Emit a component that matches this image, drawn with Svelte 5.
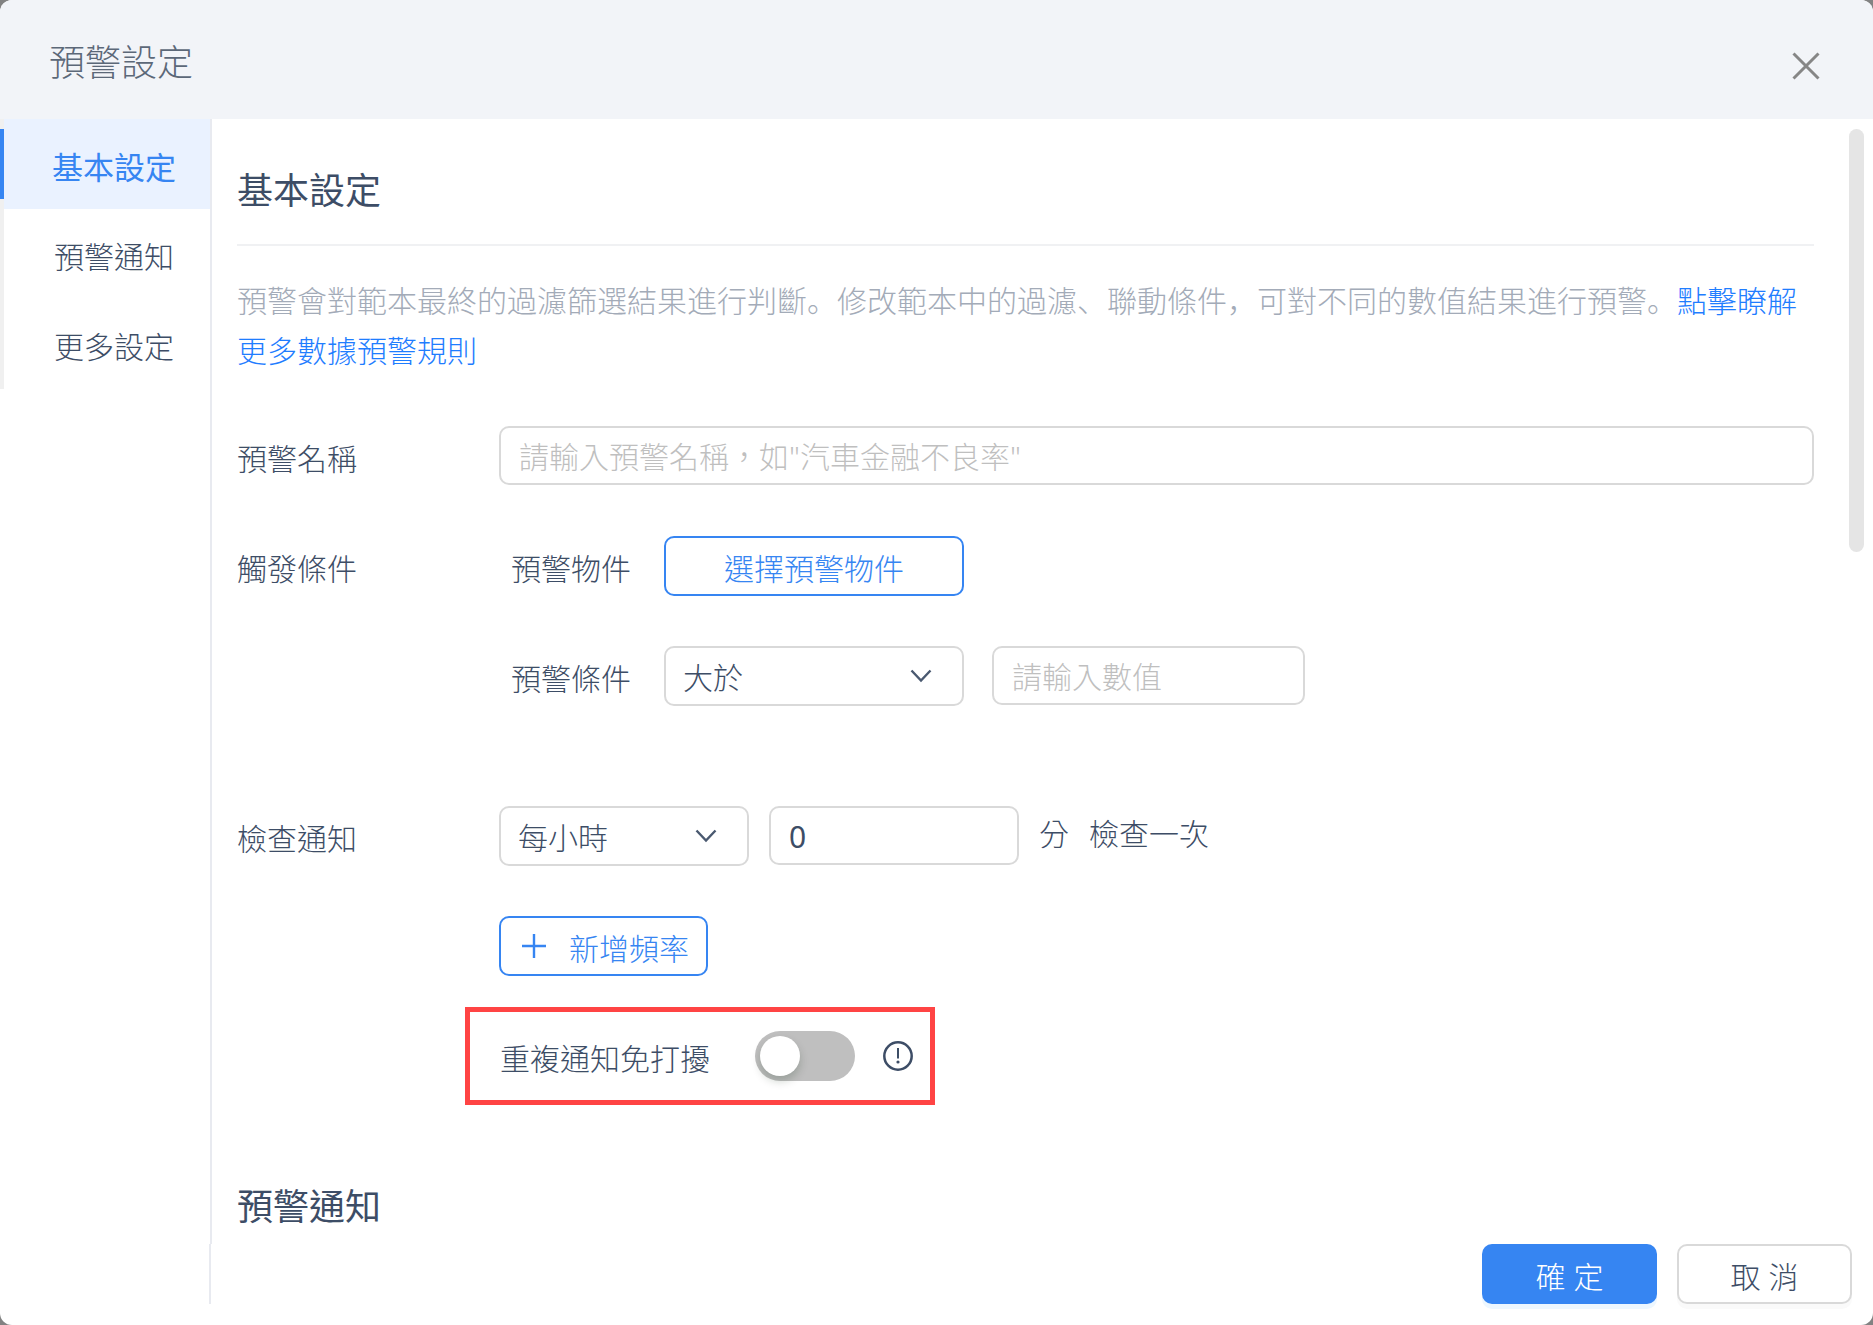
<script>
  let activeTab = 'basic';
  let alertName = '';
  let operator = 'gt';
  let threshold = '';
  let frequency = 'hour';
  let minute = '0';
  let muteRepeat = false;

  const tabs = [
    { id: 'basic', label: '基本設定' },
    { id: 'notify', label: '預警通知' },
    { id: 'more', label: '更多設定' },
  ];
</script>

<div class="dialog">
  <header class="dialog-header">
    <h1>預警設定</h1>
    <button type="button" class="close-btn" aria-label="關閉">
      <svg width="28" height="28" viewBox="0 0 28 28">
        <path d="M1.5 1.5 L26.5 26.5 M26.5 1.5 L1.5 26.5" fill="none" stroke="#868686" stroke-width="3" />
      </svg>
    </button>
  </header>

  <div class="dialog-body">
    <nav class="sidebar">
      {#each tabs as tab}
        <button
          type="button"
          class="tab"
          class:active={activeTab === tab.id}
          on:click={() => (activeTab = tab.id)}
        >
          {tab.label}
        </button>
      {/each}
    </nav>

    <main class="content">
      <h2 class="divided">基本設定</h2>
      <p class="hint">
        預警會對範本最終的過濾篩選結果進行判斷。修改範本中的過濾、聯動條件，可對不同的數值結果進行預警。<a href="#rules">點擊瞭解更多數據預警規則</a>
      </p>

      <div class="row">
        <label class="label" for="alertName">預警名稱</label>
        <input
          type="text"
          id="alertName"
          class="name-input"
          placeholder={'請輸入預警名稱，如"汽車金融不良率"'}
          bind:value={alertName}
        />
      </div>

      <div class="row">
        <span class="label">觸發條件</span>
        <div class="fields">
          <div class="line">
            <span class="sub-label">預警物件</span>
            <button type="button" class="outline-btn pick-btn">選擇預警物件</button>
          </div>
          <div class="line">
            <label class="sub-label" for="operator">預警條件</label>
            <div class="select-wrap wide">
              <select id="operator" bind:value={operator}>
                <option value="gt">大於</option>
                <option value="lt">小於</option>
                <option value="eq">等於</option>
              </select>
              <svg class="chevron" width="22" height="14" viewBox="0 0 22 14">
                <path d="M1.5 1.5 L11 11.5 L20.5 1.5" fill="none" stroke="#4a5970" stroke-width="2.4" />
              </svg>
            </div>
            <input
              type="text"
              class="threshold-input"
              aria-label="數值"
              placeholder="請輸入數值"
              bind:value={threshold}
            />
          </div>
        </div>
      </div>

      <div class="row check-row">
        <label class="label" for="frequency">檢查通知</label>
        <div class="fields">
          <div class="line">
            <div class="select-wrap">
              <select id="frequency" bind:value={frequency}>
                <option value="hour">每小時</option>
                <option value="day">每天</option>
              </select>
              <svg class="chevron" width="22" height="14" viewBox="0 0 22 14">
                <path d="M1.5 1.5 L11 11.5 L20.5 1.5" fill="none" stroke="#4a5970" stroke-width="2.4" />
              </svg>
            </div>
            <input type="text" id="minute" class="minute-input" bind:value={minute} />
            <label class="unit" for="minute">分</label>
            <span class="unit">檢查一次</span>
          </div>
          <div class="line">
            <button type="button" class="outline-btn add-btn">
              <svg width="24" height="24" viewBox="0 0 24 24">
                <path d="M12 0 V24 M0 12 H24" fill="none" stroke="#3685f2" stroke-width="2.4" />
              </svg>
              <span>新增頻率</span>
            </button>
          </div>
        </div>
      </div>

      <div class="highlight">
        <label for="muteRepeat">重複通知免打擾</label>
        <input type="checkbox" role="switch" id="muteRepeat" class="switch" bind:checked={muteRepeat} />
        <svg class="info" width="30" height="30" viewBox="0 0 30 30">
          <circle cx="15" cy="15" r="13.7" fill="none" stroke="#3d4d66" stroke-width="2.5" />
          <path d="M15 7 V17.5" stroke="#3d4d66" stroke-width="2" />
          <circle cx="15" cy="21" r="1.6" fill="#3d4d66" />
        </svg>
      </div>

      <h2>預警通知</h2>
    </main>

    <div class="scroll-track">
      <div class="scroll-thumb"></div>
    </div>
  </div>

  <footer class="dialog-footer">
    <div class="footer-side"></div>
    <button type="button" class="ok-btn">確 定</button>
    <button type="button" class="cancel-btn">取 消</button>
  </footer>
</div>

<style>
  :global(body) {
    background: #828282;
  }

  .dialog {
    display: flex;
    flex-direction: column;
    min-height: 100vh;
    border-radius: 12px;
    overflow: hidden;
    background: #fff;
    color: #3d4d66;
    font-family: "Noto Sans", "Noto Sans CJK TC", sans-serif;
    font-size: 30px;
    font-weight: 300;
    line-height: 50px;
  }

  * {
    box-sizing: border-box;
  }

  button,
  input,
  select {
    font: inherit;
    color: inherit;
    margin: 0;
    padding: 0;
    outline: none;
  }

  button {
    background: none;
    border: none;
    cursor: pointer;
  }

  svg {
    display: block;
  }

  .dialog-header {
    display: flex;
    align-items: center;
    justify-content: space-between;
    padding: 6px 53px 0 49px;
    height: 119px;
    background: #f2f4f8;
    color: #5c6878;
  }

  h1 {
    margin: 0;
    font-size: 36px;
    font-weight: 300;
    line-height: 54px;
  }

  .close-btn {
    padding-top: 6px;
  }

  .dialog-body {
    display: flex;
    flex: 1;
  }

  .sidebar {
    display: flex;
    flex-direction: column;
    flex: none;
    width: 212px;
    border-right: 2px solid #e8eaf0;
  }

  .tab {
    position: relative;
    height: 90px;
    padding: 5px 0 0 14px;
    border-left: 4px solid #f0f0f0;
    text-align: center;
  }

  .tab.active {
    background: #eaf2ff;
    color: #3685f2;
    font-size: 31px;
    font-weight: 400;
  }

  .tab.active::before {
    content: "";
    position: absolute;
    left: -4px;
    top: 10px;
    bottom: 10px;
    width: 4px;
    background: #3685f2;
  }

  .content {
    flex: 1;
    min-width: 0;
    padding: 0 0 9px 25px;
  }

  h2 {
    margin: 0;
    padding-top: 45px;
    font-size: 36px;
    font-weight: 400;
    line-height: 54px;
  }

  h2.divided {
    padding-bottom: 26px;
    border-bottom: 2px solid #f0f1f3;
  }

  .hint {
    margin: 30px 0 50px;
    color: #a3abb8;
    font-family: "Noto Sans", "Noto Sans CJK SC", sans-serif;
  }

  .hint a {
    color: #1f7dff;
    text-decoration: none;
  }

  .row {
    display: flex;
    margin-bottom: 50px;
  }

  .row.check-row {
    margin-top: 100px;
    margin-bottom: 31px;
  }

  .label {
    flex: none;
    width: 262px;
    line-height: 65px;
    height: 60px;
  }

  .fields {
    display: flex;
    flex-direction: column;
    flex: 1;
    gap: 50px;
  }

  .line {
    display: flex;
    height: 60px;
  }

  .sub-label {
    width: 165px;
    padding-left: 12px;
    line-height: 65px;
  }

  input[type="text"] {
    height: 59px;
    padding: 2px 18px 0;
    border: 2px solid #d9d9d9;
    border-radius: 10px;
    background: #fff;
  }

  input::placeholder {
    color: #bfbfbf;
    opacity: 1;
  }

  .name-input {
    flex: 1;
    min-width: 0;
  }

  .threshold-input {
    width: 313px;
    margin-left: 28px;
  }

  .minute-input {
    width: 250px;
    margin-left: 20px;
    font-weight: 400;
  }

  .select-wrap {
    position: relative;
    width: 250px;
  }

  .select-wrap.wide {
    width: 300px;
  }

  select {
    appearance: none;
    width: 100%;
    height: 60px;
    padding: 3px 50px 0 17px;
    border: 2px solid #d9d9d9;
    border-radius: 10px;
    background: #fff;
  }

  .chevron {
    position: absolute;
    right: 32px;
    top: 23px;
    pointer-events: none;
  }

  .unit {
    margin-left: 20px;
    line-height: 56px;
  }

  .outline-btn {
    height: 60px;
    padding-top: 5px;
    border: 2px solid #3685f2;
    border-radius: 10px;
    background: #fff;
    color: #3685f2;
  }

  .pick-btn {
    width: 300px;
  }

  .add-btn {
    display: flex;
    align-items: center;
    gap: 23px;
    padding: 0 17px 0 21px;
  }

  .add-btn span {
    padding-top: 5px;
  }

  .highlight {
    display: flex;
    align-items: center;
    width: 470px;
    height: 98px;
    margin: 0 0 30px 228px;
    padding-left: 30px;
    border: 5px solid #ff4444;
  }

  .highlight label {
    padding-top: 5px;
  }

  .switch {
    appearance: none;
    display: flex;
    align-items: center;
    width: 100px;
    height: 50px;
    margin-left: 45px;
    padding: 5px;
    border-radius: 25px;
    background: #bfbfbf;
    cursor: pointer;
  }

  .switch::before {
    content: "";
    width: 40px;
    height: 40px;
    border-radius: 50%;
    background: #fff;
    box-shadow: 0 5px 10px rgba(0, 35, 11, 0.2);
  }

  .switch:checked {
    justify-content: flex-end;
    background: #3685f2;
  }

  .info {
    margin-left: 28px;
  }

  .scroll-track {
    flex: none;
    width: 59px;
    padding: 10px 9px 0 35px;
  }

  .scroll-thumb {
    height: 423px;
    border-radius: 8px;
    background: #e5e5e5;
  }

  .dialog-footer {
    display: flex;
    gap: 20px;
    padding: 0 21px 21px 0;
  }

  .footer-side {
    width: 211px;
    margin-right: auto;
    border-right: 2px solid #e8eaf0;
  }

  .ok-btn,
  .cancel-btn {
    width: 175px;
    height: 60px;
    padding-top: 5px;
    border-radius: 10px;
  }

  .ok-btn {
    background: #3685f2;
    color: #fff;
    box-shadow: 0 5px 0 #edf7ff;
  }

  .cancel-btn {
    border: 2px solid #d9d9d9;
    background: #fff;
    box-shadow: 0 5px 0 #fafafa;
  }
</style>
